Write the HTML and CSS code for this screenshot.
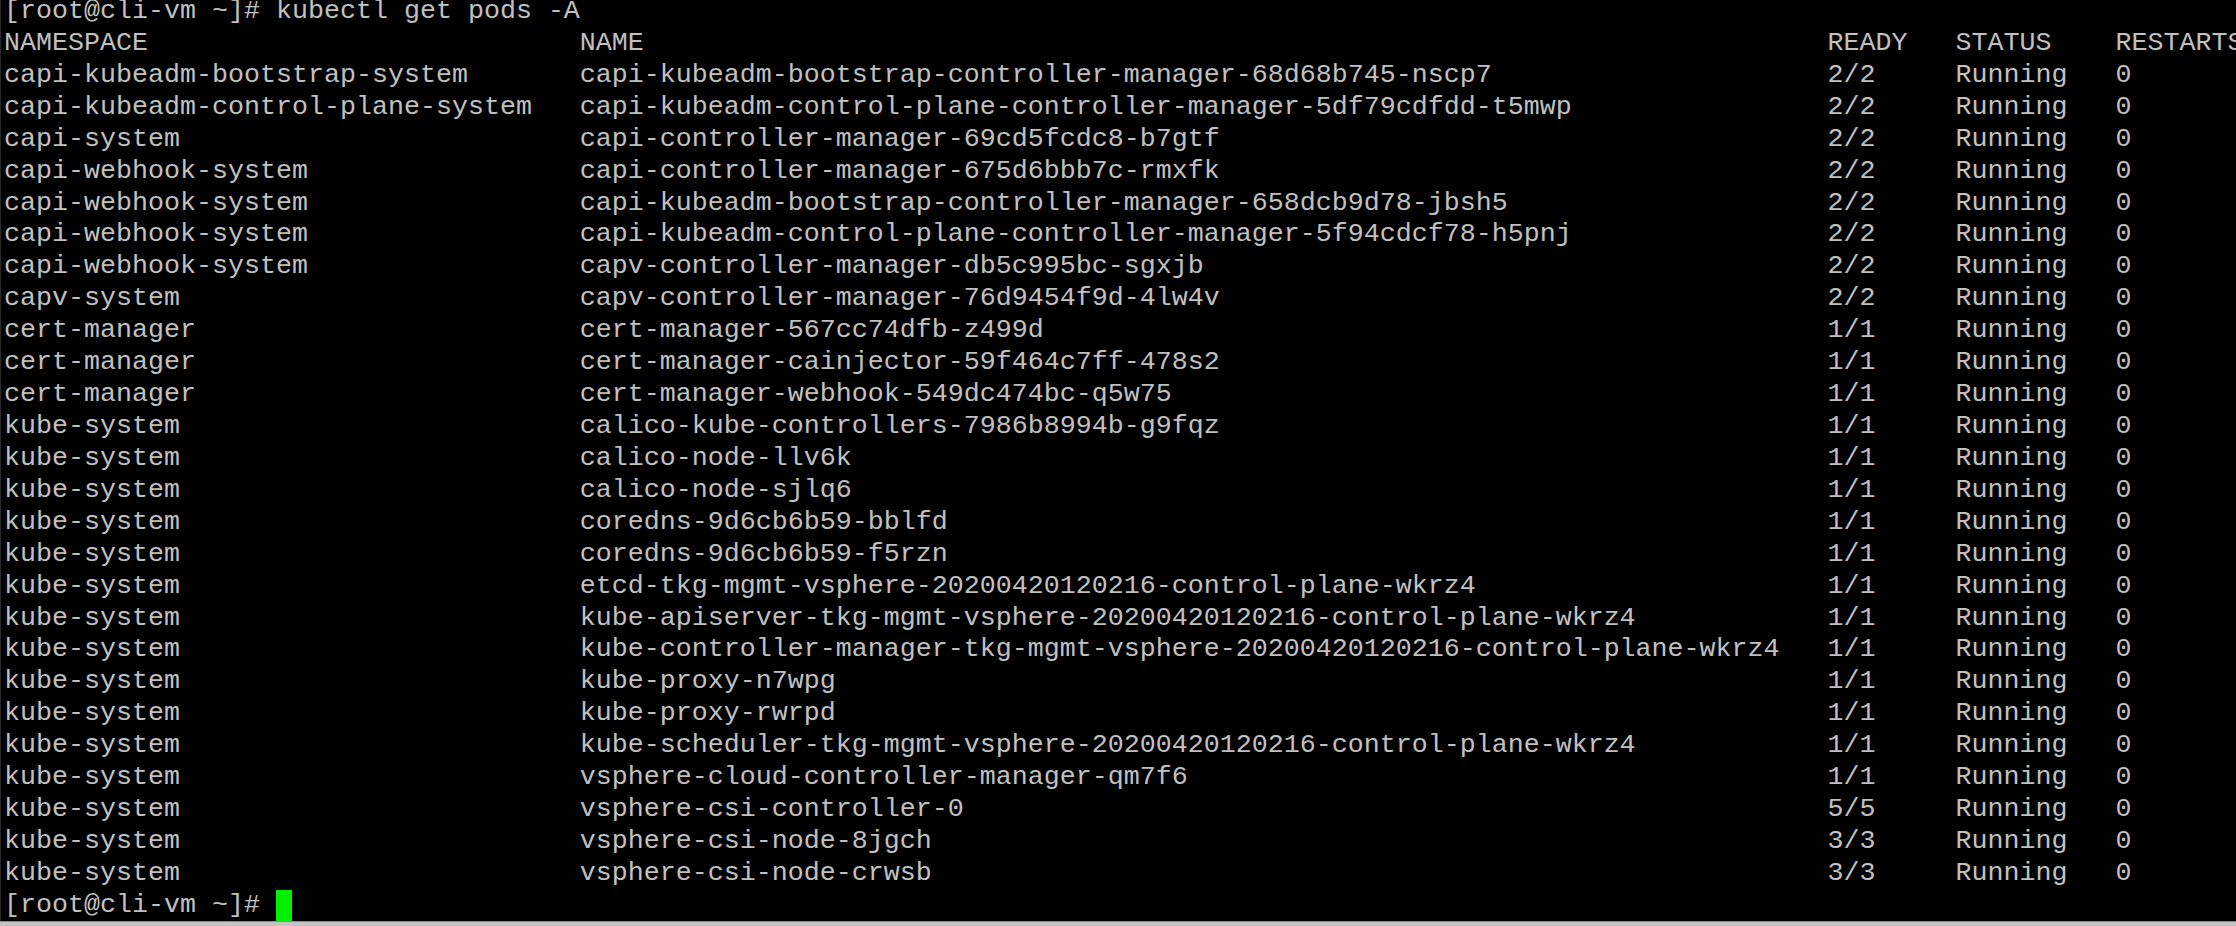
FILE: index.html
```html
<!DOCTYPE html>
<html lang="en">
<head>
<meta charset="utf-8">
<title>kubectl get pods -A</title>
<link rel="stylesheet" href="styles.css">
</head>
<body>
<div class="window">
  <div class="terminal">
    <div class="line">[root@cli-vm ~]# kubectl get pods -A</div>
    <div class="row"><span>NAMESPACE</span><span>NAME</span><span>READY</span><span>STATUS</span><span>RESTARTS</span></div>
    <div class="row"><span>capi-kubeadm-bootstrap-system</span><span>capi-kubeadm-bootstrap-controller-manager-68d68b745-nscp7</span><span>2/2</span><span>Running</span><span>0</span></div>
    <div class="row"><span>capi-kubeadm-control-plane-system</span><span>capi-kubeadm-control-plane-controller-manager-5df79cdfdd-t5mwp</span><span>2/2</span><span>Running</span><span>0</span></div>
    <div class="row"><span>capi-system</span><span>capi-controller-manager-69cd5fcdc8-b7gtf</span><span>2/2</span><span>Running</span><span>0</span></div>
    <div class="row"><span>capi-webhook-system</span><span>capi-controller-manager-675d6bbb7c-rmxfk</span><span>2/2</span><span>Running</span><span>0</span></div>
    <div class="row"><span>capi-webhook-system</span><span>capi-kubeadm-bootstrap-controller-manager-658dcb9d78-jbsh5</span><span>2/2</span><span>Running</span><span>0</span></div>
    <div class="row"><span>capi-webhook-system</span><span>capi-kubeadm-control-plane-controller-manager-5f94cdcf78-h5pnj</span><span>2/2</span><span>Running</span><span>0</span></div>
    <div class="row"><span>capi-webhook-system</span><span>capv-controller-manager-db5c995bc-sgxjb</span><span>2/2</span><span>Running</span><span>0</span></div>
    <div class="row"><span>capv-system</span><span>capv-controller-manager-76d9454f9d-4lw4v</span><span>2/2</span><span>Running</span><span>0</span></div>
    <div class="row"><span>cert-manager</span><span>cert-manager-567cc74dfb-z499d</span><span>1/1</span><span>Running</span><span>0</span></div>
    <div class="row"><span>cert-manager</span><span>cert-manager-cainjector-59f464c7ff-478s2</span><span>1/1</span><span>Running</span><span>0</span></div>
    <div class="row"><span>cert-manager</span><span>cert-manager-webhook-549dc474bc-q5w75</span><span>1/1</span><span>Running</span><span>0</span></div>
    <div class="row"><span>kube-system</span><span>calico-kube-controllers-7986b8994b-g9fqz</span><span>1/1</span><span>Running</span><span>0</span></div>
    <div class="row"><span>kube-system</span><span>calico-node-llv6k</span><span>1/1</span><span>Running</span><span>0</span></div>
    <div class="row"><span>kube-system</span><span>calico-node-sjlq6</span><span>1/1</span><span>Running</span><span>0</span></div>
    <div class="row"><span>kube-system</span><span>coredns-9d6cb6b59-bblfd</span><span>1/1</span><span>Running</span><span>0</span></div>
    <div class="row"><span>kube-system</span><span>coredns-9d6cb6b59-f5rzn</span><span>1/1</span><span>Running</span><span>0</span></div>
    <div class="row"><span>kube-system</span><span>etcd-tkg-mgmt-vsphere-20200420120216-control-plane-wkrz4</span><span>1/1</span><span>Running</span><span>0</span></div>
    <div class="row"><span>kube-system</span><span>kube-apiserver-tkg-mgmt-vsphere-20200420120216-control-plane-wkrz4</span><span>1/1</span><span>Running</span><span>0</span></div>
    <div class="row"><span>kube-system</span><span>kube-controller-manager-tkg-mgmt-vsphere-20200420120216-control-plane-wkrz4</span><span>1/1</span><span>Running</span><span>0</span></div>
    <div class="row"><span>kube-system</span><span>kube-proxy-n7wpg</span><span>1/1</span><span>Running</span><span>0</span></div>
    <div class="row"><span>kube-system</span><span>kube-proxy-rwrpd</span><span>1/1</span><span>Running</span><span>0</span></div>
    <div class="row"><span>kube-system</span><span>kube-scheduler-tkg-mgmt-vsphere-20200420120216-control-plane-wkrz4</span><span>1/1</span><span>Running</span><span>0</span></div>
    <div class="row"><span>kube-system</span><span>vsphere-cloud-controller-manager-qm7f6</span><span>1/1</span><span>Running</span><span>0</span></div>
    <div class="row"><span>kube-system</span><span>vsphere-csi-controller-0</span><span>5/5</span><span>Running</span><span>0</span></div>
    <div class="row"><span>kube-system</span><span>vsphere-csi-node-8jgch</span><span>3/3</span><span>Running</span><span>0</span></div>
    <div class="row"><span>kube-system</span><span>vsphere-csi-node-crwsb</span><span>3/3</span><span>Running</span><span>0</span></div>
    <div class="line">[root@cli-vm ~]# <span class="cursor"></span></div>
  </div>
  <div class="statusbar"></div>
</div>
</body>
</html>
```

FILE: styles.css
```css
html, body {
  margin: 0;
  padding: 0;
  background: #000;
}

.window {
  width: 2236px;
  height: 926px;
  display: flex;
  flex-direction: column;
  overflow: hidden;
  background: #000;
}

.terminal {
  flex: 1;
  overflow: hidden;
  border-left: 1px solid #2a2a2a;
  padding-left: 3px;
  padding-top: 0;
  font-family: "Liberation Mono", "Courier New", monospace;
  font-size: 26.667px;
  line-height: 31.93px;
  color: #c0c0c0;
}

.line, .row {
  height: 31.93px;
  margin: 0;
  white-space: pre;
}

.terminal > :first-child {
  margin-top: -4px;
}

.row {
  display: grid;
  grid-template-columns: 36ch 78ch 8ch 10ch auto;
}

.row span {
  white-space: pre;
}

.cursor {
  display: inline-block;
  width: 16px;
  height: 32px;
  vertical-align: top;
  background: #00f000;
}

.statusbar {
  height: 4px;
  flex: none;
  background: #c4c4c4;
  border-top: 1px solid #8a8a8a;
}
```
